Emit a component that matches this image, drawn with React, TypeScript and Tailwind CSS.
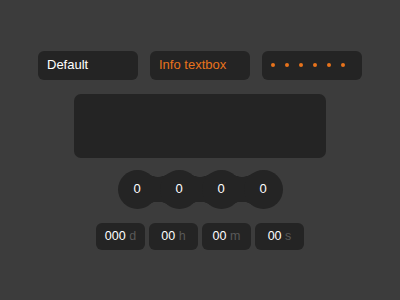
import React from 'react';

const font = { fontFamily: '"Liberation Sans", Arial, sans-serif' };

const Bubble = ({ value }: { value: string }) => (
  <div className="w-[39px] h-[39px] rounded-full bg-[#242424] flex items-center justify-center text-white text-[13px] shrink-0">
    {value}
  </div>
);

// concave joint between two bubbles
const Neck = () => (
  <div className="w-[20px] h-[39px] -mx-[8.5px] shrink-0 flex flex-col">
    <div className="h-[19.5px] bg-[radial-gradient(circle_at_50%_-10.7px,transparent_17.2px,#242424_17.7px)]" />
    <div className="h-[19.5px] bg-[radial-gradient(circle_at_50%_30.2px,transparent_17.2px,#242424_17.7px)]" />
  </div>
);

const TimeBox = ({ value, unit }: { value: string; unit: string }) => (
  <div className="w-[49px] h-[27px] rounded-[6px] bg-[#242424] flex items-center justify-center gap-[3.5px] text-[12.5px]">
    <span className="text-white">{value}</span>
    <span className="text-[#595959]">{unit}</span>
  </div>
);

export default function App() {
  return (
    <div
      className="w-[400px] h-[300px] bg-[#3c3c3c] flex flex-col items-center justify-center"
      style={font}
    >
      {/* text inputs */}
      <div className="flex gap-[12px]">
        <div className="w-[100px] h-[29px] rounded-[6px] bg-[#242424] flex items-center px-[9px] text-[13px] text-white">
          Default
        </div>
        <div className="w-[100px] h-[29px] rounded-[6px] bg-[#242424] flex items-center px-[9px] text-[13px] text-[#e8731c]">
          Info textbox
        </div>
        <div className="w-[100px] h-[29px] rounded-[6px] bg-[#242424] flex items-center gap-[10px] pl-[9px]">
          {[0, 1, 2, 3, 4, 5].map((i) => (
            <span key={i} className="w-[4px] h-[4px] rounded-full bg-[#e8731c]" />
          ))}
        </div>
      </div>

      {/* textarea */}
      <div className="mt-[14px] w-[252px] h-[64px] rounded-[7px] bg-[#242424]" />

      {/* pin bubbles */}
      <div className="mt-[12px] flex items-center">
        <Bubble value="0" />
        <Neck />
        <Bubble value="0" />
        <Neck />
        <Bubble value="0" />
        <Neck />
        <Bubble value="0" />
      </div>

      {/* countdown */}
      <div className="mt-[14px] flex gap-[4px]">
        <TimeBox value="000" unit="d" />
        <TimeBox value="00" unit="h" />
        <TimeBox value="00" unit="m" />
        <TimeBox value="00" unit="s" />
      </div>
    </div>
  );
}
